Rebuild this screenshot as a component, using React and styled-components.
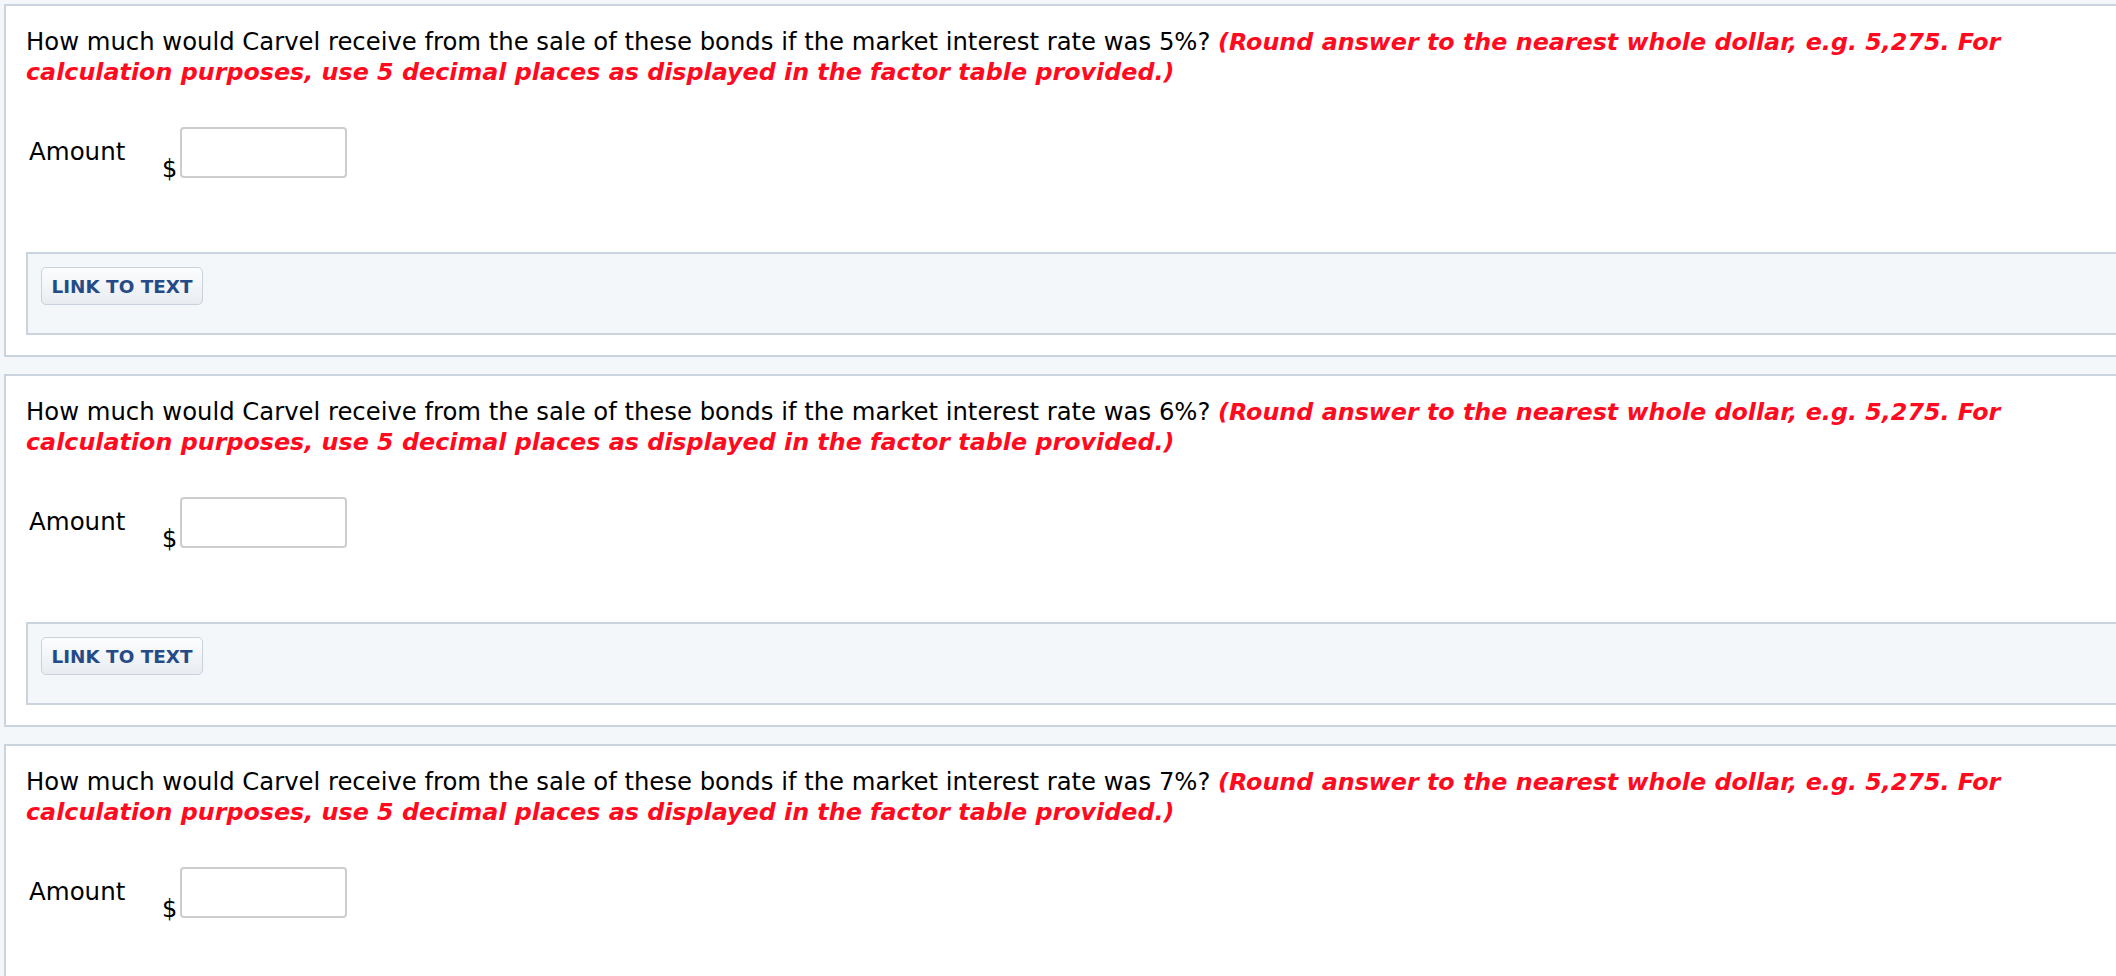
import React from "react";
import styled, { createGlobalStyle } from "styled-components";

const GlobalStyle = createGlobalStyle`
  html, body {
    margin: 0;
    padding: 0;
    background: #f4f7fa;
    overflow: hidden;
  }
  body {
    font-family: Verdana, "DejaVu Sans", sans-serif;
    color: #000;
  }
`;

const Page = styled.div`
  display: flex;
  flex-direction: column;
  gap: 17px;
  padding: 4px 0 0 4px;
  width: 2116px;
  box-sizing: border-box;
`;

const Card = styled.section`
  width: calc(100% + 60px);
  box-sizing: border-box;
  background: #ffffff;
  border: 2px solid #cbd3de;
  padding: 21px 0 20px 20px;
`;

const Question = styled.p`
  margin: 0;
  max-width: 2060px;
  font-size: 24.3px;
  line-height: 30px;
  color: #000;
`;

const Hint = styled.strong`
  color: #ff0a1e;
  font-size: 23.8px;
  font-weight: bold;
  font-style: italic;
`;

const AmountRow = styled.div`
  display: flex;
  align-items: flex-start;
  margin-top: 40px;
`;

const AmountLabel = styled.label`
  width: 133px;
  padding-left: 3px;
  margin-top: 10px;
  font-size: 24.5px;
  line-height: 30px;
`;

const Field = styled.div`
  display: flex;
  align-items: flex-end;
  gap: 3px;
`;

const Dollar = styled.span`
  font-size: 24px;
  line-height: 24px;
  margin-bottom: -3px;
`;

const AmountInput = styled.input`
  box-sizing: border-box;
  width: 167px;
  height: 51px;
  border: 2px solid #cdcdcd;
  border-radius: 4px;
  background: #fff;
  font-size: 20px;
  font-family: inherit;
  padding: 0 8px;
  outline: none;
`;

const LinkBox = styled.div`
  margin-top: 74px;
  background: #f4f7fa;
  border: 2px solid #cbd3de;
  border-right: none;
  padding: 13px 13px 28px 13px;
`;

const LinkButton = styled.button`
  box-sizing: border-box;
  width: 162px;
  height: 38px;
  display: flex;
  align-items: center;
  justify-content: center;
  border: 1px solid #c9d1dc;
  border-radius: 5px;
  background: linear-gradient(#fdfdfe, #e8ecf1);
  color: #244b86;
  font-family: Verdana, "DejaVu Sans", sans-serif;
  font-weight: bold;
  font-size: 18.4px;
  padding: 0;
  cursor: pointer;
`;

const rates = ["5%", "6%", "7%"];

function QuestionCard({ rate }) {
  return (
    <Card>
      <Question>
        How much would Carvel receive from the sale of these bonds if the market interest rate was {rate}?{" "}
        <Hint>
          (Round answer to the nearest whole dollar, e.g. 5,275. For calculation purposes, use 5 decimal places as
          displayed in the factor table provided.)
        </Hint>
      </Question>
      <AmountRow>
        <AmountLabel>Amount</AmountLabel>
        <Field>
          <Dollar>$</Dollar>
          <AmountInput type="text" aria-label="Amount" />
        </Field>
      </AmountRow>
      <LinkBox>
        <LinkButton type="button">LINK TO TEXT</LinkButton>
      </LinkBox>
    </Card>
  );
}

export default function App() {
  return (
    <>
      <GlobalStyle />
      <Page>
        {rates.map((r) => (
          <QuestionCard key={r} rate={r} />
        ))}
      </Page>
    </>
  );
}
